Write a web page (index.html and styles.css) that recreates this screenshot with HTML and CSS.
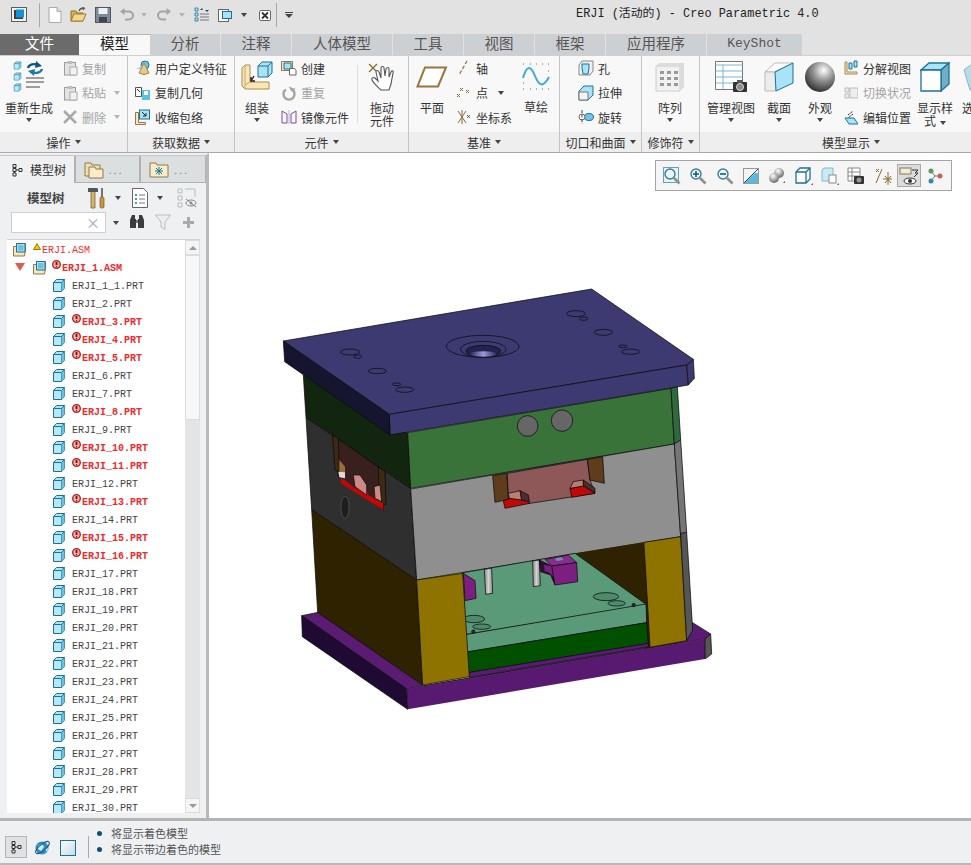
FILE: index.html
```html
<!DOCTYPE html>
<html lang="zh">
<head>
<meta charset="utf-8">
<title>ERJI (活动的) - Creo Parametric 4.0</title>
<link rel="stylesheet" href="styles.css">
</head>
<body>
<svg class="sprite" aria-hidden="true">
  <defs>
    <symbol id="part" viewBox="0 0 14 15"><path d="M1.5 4.5 4.5 1.5h8v9l-3 3h-8z" fill="#a9e3f8" stroke="#1d7196"/><path d="M1.5 4.5h8v9" fill="none" stroke="#1d7196"/><path d="M9.5 4.5l3-3v9l-3 3z" fill="#6fc0dc"/><path d="M9.5 4.5l3-3" stroke="#1d7196"/><path d="M2.500 5.500h6.500v7h-6.500z" fill="#b6e9fb"/></symbol>
    <symbol id="asm" viewBox="0 0 15 15"><path d="M1.500 4.500h3v-3h9v7l-1 5.500h-11z" fill="#f8e5b8" stroke="#8d7a52"/><path d="M4.500 1.500h8.500v8.500h-8.500z" fill="#a9e3f8" stroke="#1d7196"/><path d="M6 3h5.500v5.500h-5.500z" fill="#6fc0dc"/></symbol>
    <symbol id="err" viewBox="0 0 9 9"><circle cx="4.500" cy="4.500" r="3.800" fill="#f3b0ac" stroke="#b01818" stroke-width="1.300"/><path d="M4.500 2v3" stroke="#a00000" stroke-width="1.800"/><path d="M4.500 6v1.200" stroke="#a00000"/></symbol>
    <symbol id="mag" viewBox="0 0 18 18"><circle cx="7" cy="7" r="5" fill="#eaf6fb" stroke="#3b7d9b" stroke-width="1.400"/><path d="M11 11l5.500 5.500" stroke="#8f8f8f" stroke-width="2.600"/></symbol>
    <symbol id="clip" viewBox="0 0 16 16"><rect x="2.500" y="2.500" width="11" height="12.500" fill="#e3e3e3" stroke="#9c9c9c"/><rect x="5.500" y="1" width="5" height="3" fill="#bdbdbd"/><rect x="8" y="7" width="7" height="8" fill="#f2f2f2" stroke="#aaa"/></symbol>
    <symbol id="folder" viewBox="0 0 20 20"><path d="M1 4h6l1 2h8v11H1z" fill="#f3dfa8" stroke="#8d7a52"/><path d="M5 8h6l1 2h7v9H5z" fill="#f9ecc6" stroke="#8d7a52"/></symbol>
    <symbol id="treeic" viewBox="0 0 14 16"><path d="M3 2.500h3v3h-3zM3 6.500h3v3h-3zM3 11h3v3h-3zM9 6.500h3v3h-3zM4.500 5.500v1M4.500 9.500v1.500M6 8h3" fill="none" stroke="#333"/></symbol>
  </defs>
</svg>
<div class="app">
  <header class="titlebar">
    <div class="qat">
      <svg width="16" height="16" viewBox="0 0 16 16"><rect x=".5" y=".5" width="15" height="14" fill="#f2f2f2" stroke="#5c5c5c"/><rect x="3" y="3" width="9" height="9" fill="#3d3d3d"/><rect x="5" y="2.500" width="8" height="8" fill="#0f93dc"/></svg>
      <span class="qsep"></span>
      <svg width="14" height="16" viewBox="0 0 14 16"><path d="M1 .5h8l4 4v11H1z" fill="#fff" stroke="#aaa"/><path d="M9 .5v4h4" fill="#ddd" stroke="#aaa"/></svg>
      <svg width="17" height="16" viewBox="0 0 17 16"><path d="M1 4h5l1 2h6v8H1z" fill="#d9b25c" stroke="#8f6d25"/><path d="M1 14l3-7h12l-3 7z" fill="#f4d78d" stroke="#a17d2c"/><path d="M9 4c1-3 3-3 5-3l-1-1m1 1-1 2" fill="none" stroke="#555" stroke-width="1.300"/></svg>
      <svg width="16" height="16" viewBox="0 0 16 16"><rect x=".5" y=".5" width="15" height="15" fill="#7e8b96" stroke="#555"/><rect x="3.500" y="1" width="9" height="6" fill="#eef2f5"/><rect x="4" y="10" width="8" height="5" fill="#3c4650"/></svg>
      <svg width="15" height="14" viewBox="0 0 15 14"><path d="M4 3.500h6a3.500 3.500 0 0 1 0 8H6" fill="none" stroke="#a4a4a4" stroke-width="2"/><path d="M5.500 0v7L1 3.500z" fill="#a4a4a4"/></svg>
      <i class="caret gray"></i>
      <svg width="15" height="14" viewBox="0 0 15 14"><path d="M11 3.500H5a3.500 3.500 0 0 0 0 8h4" fill="none" stroke="#a4a4a4" stroke-width="2"/><path d="M9.500 0v7L14 3.500z" fill="#a4a4a4"/></svg>
      <i class="caret gray"></i>
      <svg width="16" height="16" viewBox="0 0 16 16"><path d="M1 1h3v3H1zM1 6h3v3H1zM1 11h3v3H1z" fill="#bfe6f5" stroke="#1d7196" stroke-width=".8"/><path d="M6 7h9M6 10h9M6 13h9" stroke="#777"/><path d="M6 3h3l-1-2zM15 3h-4l2 2z" fill="#14506d"/></svg>
      <svg width="15" height="15" viewBox="0 0 15 15"><rect x=".5" y="1.500" width="10" height="12" fill="#fff" stroke="#666"/><rect x="4.500" y="3.500" width="9" height="7" fill="#a9e3f8" stroke="#1d7196"/></svg>
      <i class="caret"></i>
      <svg width="12" height="11" viewBox="0 0 12 11"><rect x=".5" y=".5" width="11" height="10" rx="1.500" fill="#fff" stroke="#666"/><path d="M3 2.500l6 6m0-6-6 6" stroke="#333" stroke-width="1.800"/></svg>
      <span class="qsep"></span>
      <span class="more"><i class="bar"></i><i class="caret"></i></span>
    </div>
    <div class="wintitle">ERJI (活动的) - Creo Parametric 4.0</div>
  </header>

  <nav class="tabs">
    <span class="tab file">文件</span>
    <span class="tab active">模型</span>
    <span class="tab w70">分析</span>
    <span class="tab w70">注释</span>
    <span class="tab w100">人体模型</span>
    <span class="tab w70">工具</span>
    <span class="tab w70">视图</span>
    <span class="tab w70">框架</span>
    <span class="tab w100">应用程序</span>
    <span class="tab keyshot">KeyShot</span>
  </nav>

  <section class="ribbon">
    <div class="group g-op">
      <div class="gbody">
        <div class="big b-regen">
          <svg class="bigic" width="32" height="32" viewBox="0 0 32 32"><use href="#part" x="0" y="0" width="9" height="9"/><use href="#part" x="0" y="11" width="9" height="9"/><use href="#part" x="0" y="22" width="9" height="9"/><path d="M13 17h18M13 21h18M13 26h14" stroke="#808080" stroke-width="1.600"/><path d="M15 7a6.500 5 0 0 1 10-3" fill="none" stroke="#14567a" stroke-width="2.400"/><path d="M23 0l6 5-7 2z" fill="#14567a"/><path d="M29 8a6.500 5 0 0 1-10 3" fill="none" stroke="#1a7aa8" stroke-width="2.400"/><path d="M21 15l-6-5 7-2z" fill="#1a7aa8"/></svg>
          <span>重新生成</span><i class="caret"></i>
        </div>
        <div class="col c-op muted">
          <div class="row"><svg width="16" height="16"><use href="#clip"/></svg><span>复制</span></div>
          <div class="row"><svg width="16" height="16"><use href="#clip"/></svg><span>粘贴</span><i class="caret gray"></i></div>
          <div class="row"><svg width="16" height="16" viewBox="0 0 16 16"><path d="M2 2l12 12m0-12L2 14" stroke="#a8a8a8" stroke-width="2.500"/></svg><span>删除</span><i class="caret gray"></i></div>
        </div>
      </div>
      <div class="glabel">操作<i class="caret"></i></div>
    </div>

    <div class="group g-data">
      <div class="gbody">
        <div class="col c-data">
          <div class="row"><svg width="16" height="16" viewBox="0 0 16 16"><circle cx="10" cy="5" r="4" fill="#6ec6ea" stroke="#1d7196"/><path d="M1 9l7-4 0 4z" fill="#9fd6ec"/><path d="M9 3 4 13q5 3 10 0z" fill="#e6c98e" stroke="#a38442"/></svg><span>用户定义特征</span></div>
          <div class="row"><svg width="16" height="16" viewBox="0 0 16 16"><path d="M.5 2.500h6v9h-6z" fill="#fff" stroke="#555"/><path d="M2 4l3 3" stroke="#333"/><path d="M7 5h8v10H7z" fill="#5bc0e6"/><path d="M9 6h4v4H9z" fill="#fff"/></svg><span>复制几何</span></div>
          <div class="row"><svg width="16" height="16" viewBox="0 0 16 16"><path d="M.5 3.500h3v10h7v2h-10z" fill="#f8e5b8" stroke="#8d7a52"/><rect x="4.500" y="1" width="10" height="9" fill="#a9e3f8" stroke="#1d7196"/><path d="M7 3l4 4m0-3v3H8" fill="none" stroke="#222"/></svg><span>收缩包络</span></div>
        </div>
      </div>
      <div class="glabel">获取数据<i class="caret"></i></div>
    </div>

    <div class="group g-comp">
      <div class="gbody">
        <div class="big b-asm">
          <svg class="bigic" width="32" height="32" viewBox="0 0 32 32"><path d="M1 7l3-3h5v17h19v7H4l-3-3z" fill="#fbe7b5" stroke="#a88c50"/><path d="M4 4v24M9 21l-5 3" stroke="#c7a868" fill="none"/><path d="M17 5l4-4h10v11l-4 4H17z" fill="#a9e3f8" stroke="#1d7196"/><path d="M27 16V5l4-4M27 5H17" fill="none" stroke="#1d7196"/><path d="M13 15l-3 5m0-4v4h4" fill="none" stroke="#222" stroke-width="1.400"/></svg>
          <span>组装</span><i class="caret"></i>
        </div>
        <div class="col c-comp">
          <div class="row"><svg width="16" height="16" viewBox="0 0 16 16"><path d="M.5 1.500h11v9h-11z" fill="#f8e5b8" stroke="#8d7a52"/><path d="M3 3h7v6H3z" fill="#a9e3f8" stroke="#1d7196"/><path d="M8.500 8.500h5l1.500 2v4.500H8.500z" fill="#fff" stroke="#666"/></svg><span>创建</span></div>
          <div class="row muted"><svg width="16" height="16" viewBox="0 0 16 16"><path d="M5 4.500a5.500 5.500 0 1 0 6 0" fill="none" stroke="#a4a4a4" stroke-width="2.400"/><path d="M9 1v6h5z" fill="#a4a4a4" transform="rotate(-30 9 4)"/></svg><span>重复</span></div>
          <div class="row"><svg width="16" height="16" viewBox="0 0 16 16"><path d="M1 2l5 3v9H1zM15 2l-5 3v9h5z" fill="none" stroke="#7b4da3"/><path d="M8 1v14" stroke="#bbb"/></svg><span>镜像元件</span></div>
        </div>
        <span class="vsep"></span>
        <div class="big b-drag tall">
          <svg class="bigic" width="28" height="29" viewBox="0 0 28 29"><path d="M1 1l8 8m0-8-8 8" stroke="#8b6a2f" stroke-width="1.300"/><path d="M13 27c-3-3-7-6-9-10-1-2 1-3 3-2l3 3-2-9c0-2 2-2 3 0l2 6V5c0-2 3-2 3 0l1 8 1-7c1-2 3-2 3 0l0 8 2-5c1-2 3-1 2 1l-2 11-2 6z" fill="#fff" stroke="#555" stroke-width="1.100"/></svg>
          <span class="twoline">拖动<br>元件</span>
        </div>
      </div>
      <div class="glabel">元件<i class="caret"></i></div>
    </div>

    <div class="group g-datum">
      <div class="gbody">
        <div class="big b-plane">
          <svg class="bigic plane" width="32" height="22" viewBox="0 0 32 22"><path d="M9 1.500h21l-8 19H1.500z" fill="#fff" stroke="#96743a" stroke-width="2"/></svg>
          <span>平面</span>
        </div>
        <div class="col c-datum">
          <div class="row"><svg width="14" height="16" viewBox="0 0 14 16"><path d="M11 1 3 15" stroke="#96743a" stroke-width="1.300" stroke-dasharray="3.500 2"/></svg><span>轴</span></div>
          <div class="row"><svg width="14" height="16" viewBox="0 0 14 16"><path d="M4 3l3 3m0-3-3 3M10 5l3 3m0-3-3 3M1 9l3 3m0-3-3 3" stroke="#8b6a2f"/></svg><span>点</span><i class="caret"></i></div>
          <div class="row"><svg width="14" height="16" viewBox="0 0 14 16"><path d="M2 2l8 12m0-12L2 14M6 1v14" stroke="#8b6a2f" fill="none"/><path d="M11 6l3 3m0-3-3 3" stroke="#333" stroke-width=".8"/></svg><span>坐标系</span></div>
        </div>
        <div class="big b-sketch tall">
          <svg class="bigic" width="28" height="28" viewBox="0 0 28 28"><path d="M1 15C5 1 9 3 13 13s8 12 14 1" fill="none" stroke="#3fa9d8" stroke-width="2"/><path d="M1 1h1M8 1h1M14 1h1M20 1h1M26 1h1M1 26h1M8 26h1M14 26h1M20 26h1M26 26h1M26 8h1M1 20h1" stroke="#666"/></svg>
          <span>草绘</span>
        </div>
      </div>
      <div class="glabel">基准<i class="caret"></i></div>
    </div>

    <div class="group g-cut">
      <div class="gbody">
        <div class="col c-cut">
          <div class="row"><svg width="16" height="16" viewBox="0 0 16 16"><path d="M1 5l3-4h11v10l-3 4H1z" fill="#f0f0f0" stroke="#888"/><path d="M4 4h7v4l-1 6H5L4 8z" fill="#a9e3f8" stroke="#1d7196"/></svg><span>孔</span></div>
          <div class="row"><svg width="16" height="16" viewBox="0 0 16 16"><path d="M1 6l5-5h9v9l-5 5H1z" fill="#a9e3f8" stroke="#1d7196"/><path d="M1 7h9v8H1z" fill="#f4f4f4" stroke="#777"/></svg><span>拉伸</span></div>
          <div class="row"><svg width="16" height="16" viewBox="0 0 16 16"><ellipse cx="11" cy="8" rx="4.500" ry="3.500" fill="#6ec6ea" stroke="#1d7196"/><ellipse cx="4" cy="8" rx="3" ry="3" fill="#fff" stroke="#666"/><path d="M4 1v14" stroke="#444" stroke-dasharray="3 1.500"/></svg><span>旋转</span></div>
        </div>
      </div>
      <div class="glabel">切口和曲面<i class="caret"></i></div>
    </div>

    <div class="group g-dec">
      <div class="gbody">
        <div class="big b-pat tall30">
          <svg class="bigic" width="30" height="30" viewBox="0 0 30 30"><path d="M1 4h24v25H1z" fill="#f1f1f1" stroke="#ccc"/><path d="M25 4l4-3v24l-4 4zM1 4l3-3h25l-4 3z" fill="#dcdcdc"/><path d="M5 9h4v3H5zM12 9h4v3h-4zM19 9h4v3h-4zM5 15h4v3H5zM12 15h4v3h-4zM19 15h4v3h-4zM5 21h4v3H5zM12 21h4v3h-4zM19 21h4v3h-4z" fill="#9a9a9a"/></svg>
          <span>阵列</span><i class="caret"></i>
        </div>
      </div>
      <div class="glabel">修饰符<i class="caret"></i></div>
    </div>

    <div class="group g-disp">
      <div class="gbody">
        <div class="big b-view">
          <svg class="bigic" width="32" height="32" viewBox="0 0 32 32"><path d="M.5.500h27v28H.5z" fill="#fff" stroke="#777"/><path d="M.5 4h27M.5 10h27M.5 16h27M.5 22h27M8 4v24" stroke="#79b8d0"/><rect x="18" y="21" width="14" height="10" rx="1" fill="#333"/><rect x="22" y="19" width="5" height="3" fill="#555"/><circle cx="25" cy="26" r="3.500" fill="#8a8a8a" stroke="#ddd"/></svg>
          <span>管理视图</span><i class="caret"></i>
        </div>
        <div class="big b-sec tall30">
          <svg class="bigic" width="30" height="30" viewBox="0 0 30 30"><path d="M1 10 11 1h18L10 10z" fill="#fff" stroke="#bbb"/><path d="M1 10h11v19H1z" fill="#ececec" stroke="#bbb"/><path d="M11 10 29 1v20L12 29z" fill="#a9e3f8" stroke="#1d7196"/></svg>
          <span>截面</span><i class="caret"></i>
        </div>
        <div class="big b-app tall30">
          <svg class="bigic" width="30" height="30" viewBox="0 0 30 30"><defs><radialGradient id="sph" cx=".62" cy=".28" r=".8"><stop offset="0" stop-color="#fff"/><stop offset=".45" stop-color="#8e8e8e"/><stop offset="1" stop-color="#222"/></radialGradient></defs><circle cx="15" cy="15" r="15" fill="url(#sph)"/></svg>
          <span>外观</span><i class="caret"></i>
        </div>
        <div class="col c-disp">
          <div class="row"><svg width="14" height="16" viewBox="0 0 14 16"><path d="M1 2v12h12v-2H3V2z" fill="#f8e5b8" stroke="#a88c50"/><path d="M5 3h3v6H5zM10 1h3v6h-3z" fill="#a9e3f8" stroke="#1d7196"/></svg><span>分解视图</span></div>
          <div class="row muted"><svg width="14" height="16" viewBox="0 0 14 16"><path d="M1 3h4v4H1zM1 9h4v4H1zM6 3h8v10H6z" fill="#eee" stroke="#bbb"/></svg><span>切换状况</span></div>
          <div class="row"><svg width="14" height="16" viewBox="0 0 14 16"><path d="M1 9h9l4 6H5z" fill="#a9e3f8" stroke="#1d7196"/><path d="M4 6l5-4m0 3-5 4" stroke="#222" stroke-dasharray="2 1"/></svg><span>编辑位置</span></div>
        </div>
        <div class="big b-style tall30">
          <svg class="bigic" width="30" height="30" viewBox="0 0 30 30"><path d="M1 8l8-7h20L21 8z" fill="#a9e3f8" stroke="#1d7196" stroke-width="1.300"/><path d="M21 8l8-7v21l-8 7z" fill="#6fb0c6" stroke="#1d7196" stroke-width="1.300"/><path d="M1 8h20v21H1z" fill="#fff" stroke="#1d7196" stroke-width="1.300"/></svg>
          <span class="twoline">显示样<br>式<i class="caret inl"></i></span>
        </div>
        <div class="big b-clip tall30">
          <svg class="bigic" width="30" height="30" viewBox="0 0 30 30"><path d="M2 8 10 2h18l-4 26H8z" fill="#b6dcea" stroke="#8fb4c4"/></svg>
          <span>选</span>
        </div>
      </div>
      <div class="glabel">模型显示<i class="caret"></i></div>
    </div>
  </section>

  <main class="main">
    <aside class="side">
      <div class="stabs">
        <div class="stab on"><svg width="14" height="16"><use href="#treeic"/></svg><span>模型树</span></div>
        <div class="stab"><svg width="20" height="20"><use href="#folder"/></svg><span class="dots">. . .</span></div>
        <div class="stab"><svg width="20" height="18" viewBox="0 0 20 18"><path d="M1 3h6l1 2h11v12H1z" fill="#f9ecc6" stroke="#8d7a52"/><path d="M6 11h8M10 7v8M7 8l6 6m0-6-6 6" stroke="#16709b"/></svg><span class="dots">. . .</span></div>
      </div>
      <div class="stool">
        <b>模型树</b>
        <svg class="hammer" width="18" height="22" viewBox="0 0 18 22"><path d="M3 4h4v17H3z" fill="#d7b36a" stroke="#6d5327" stroke-width=".7"/><path d="M0 1h9l1 1v3H0z" fill="#555"/><path d="M14 1v9" stroke="#555" stroke-width="1.600"/><rect x="12" y="10" width="4" height="11" rx="1.500" fill="#c8963c" stroke="#6d5327" stroke-width=".7"/></svg>
        <i class="caret"></i>
        <svg class="docic" width="16" height="20" viewBox="0 0 16 20"><path d="M.5.500h11l4 4v15H.5z" fill="#fff" stroke="#666"/><path d="M3 7h2M3 11h2M3 15h2" stroke="#1d7196" stroke-width="1.500"/><path d="M7 7h6M7 11h6M7 15h6" stroke="#777"/></svg>
        <i class="caret"></i>
        <svg class="treeeye" width="20" height="20" viewBox="0 0 20 20"><path d="M1 1h4v4H1zM1 8h4v4H1zM1 15h4v4H1zM8 1h10v8" fill="none" stroke="#bbb"/><ellipse cx="14" cy="15" rx="5" ry="3" fill="none" stroke="#888"/><circle cx="14" cy="15" r="1.500" fill="#888"/><path d="M9 11l10 8" stroke="#888"/></svg>
      </div>
      <div class="ssearch">
        <div class="sinput"><span>×</span></div>
        <i class="caret"></i>
        <svg class="bino" width="16" height="16" viewBox="0 0 16 16"><path d="M3 1h3v4h1v9H1V6zM13 1h-3v4H9v9h6V6z" fill="#3c3c3c"/><path d="M7 6h2v3H7z" fill="#777"/></svg>
        <svg class="funnel" width="16" height="16" viewBox="0 0 16 16"><path d="M.5 1h15l-5.500 7v7.500L6 13V8z" fill="#eee" stroke="#bcbcbc"/></svg>
        <span class="plus"></span>
      </div>
      <div class="tree">
        <div class="rows">
          <div class="node top"><svg class="ic15" width="15" height="15"><use href="#asm"/></svg><svg class="flag" width="8" height="7" viewBox="0 0 8 7"><path d="M4 .5 7.500 6.500h-7z" fill="#f4c400" stroke="#a07b00"/></svg><span class="bad">ERJI.ASM</span></div>
          <div class="node l1"><i class="open"></i><svg class="ic15" width="15" height="15"><use href="#asm"/></svg><svg class="flag" width="9" height="9"><use href="#err"/></svg><span class="bad strong">ERJI_1.ASM</span></div>
          <div class="node l2"><svg width="14" height="15"><use href="#part"/></svg><span>ERJI_1_1.PRT</span></div>
          <div class="node l2"><svg width="14" height="15"><use href="#part"/></svg><span>ERJI_2.PRT</span></div>
          <div class="node l2"><svg width="14" height="15"><use href="#part"/></svg><svg class="flag" width="9" height="9"><use href="#err"/></svg><span class="bad strong">ERJI_3.PRT</span></div>
          <div class="node l2"><svg width="14" height="15"><use href="#part"/></svg><svg class="flag" width="9" height="9"><use href="#err"/></svg><span class="bad strong">ERJI_4.PRT</span></div>
          <div class="node l2"><svg width="14" height="15"><use href="#part"/></svg><svg class="flag" width="9" height="9"><use href="#err"/></svg><span class="bad strong">ERJI_5.PRT</span></div>
          <div class="node l2"><svg width="14" height="15"><use href="#part"/></svg><span>ERJI_6.PRT</span></div>
          <div class="node l2"><svg width="14" height="15"><use href="#part"/></svg><span>ERJI_7.PRT</span></div>
          <div class="node l2"><svg width="14" height="15"><use href="#part"/></svg><svg class="flag" width="9" height="9"><use href="#err"/></svg><span class="bad strong">ERJI_8.PRT</span></div>
          <div class="node l2"><svg width="14" height="15"><use href="#part"/></svg><span>ERJI_9.PRT</span></div>
          <div class="node l2"><svg width="14" height="15"><use href="#part"/></svg><svg class="flag" width="9" height="9"><use href="#err"/></svg><span class="bad strong">ERJI_10.PRT</span></div>
          <div class="node l2"><svg width="14" height="15"><use href="#part"/></svg><svg class="flag" width="9" height="9"><use href="#err"/></svg><span class="bad strong">ERJI_11.PRT</span></div>
          <div class="node l2"><svg width="14" height="15"><use href="#part"/></svg><span>ERJI_12.PRT</span></div>
          <div class="node l2"><svg width="14" height="15"><use href="#part"/></svg><svg class="flag" width="9" height="9"><use href="#err"/></svg><span class="bad strong">ERJI_13.PRT</span></div>
          <div class="node l2"><svg width="14" height="15"><use href="#part"/></svg><span>ERJI_14.PRT</span></div>
          <div class="node l2"><svg width="14" height="15"><use href="#part"/></svg><svg class="flag" width="9" height="9"><use href="#err"/></svg><span class="bad strong">ERJI_15.PRT</span></div>
          <div class="node l2"><svg width="14" height="15"><use href="#part"/></svg><svg class="flag" width="9" height="9"><use href="#err"/></svg><span class="bad strong">ERJI_16.PRT</span></div>
          <div class="node l2"><svg width="14" height="15"><use href="#part"/></svg><span>ERJI_17.PRT</span></div>
          <div class="node l2"><svg width="14" height="15"><use href="#part"/></svg><span>ERJI_18.PRT</span></div>
          <div class="node l2"><svg width="14" height="15"><use href="#part"/></svg><span>ERJI_19.PRT</span></div>
          <div class="node l2"><svg width="14" height="15"><use href="#part"/></svg><span>ERJI_20.PRT</span></div>
          <div class="node l2"><svg width="14" height="15"><use href="#part"/></svg><span>ERJI_21.PRT</span></div>
          <div class="node l2"><svg width="14" height="15"><use href="#part"/></svg><span>ERJI_22.PRT</span></div>
          <div class="node l2"><svg width="14" height="15"><use href="#part"/></svg><span>ERJI_23.PRT</span></div>
          <div class="node l2"><svg width="14" height="15"><use href="#part"/></svg><span>ERJI_24.PRT</span></div>
          <div class="node l2"><svg width="14" height="15"><use href="#part"/></svg><span>ERJI_25.PRT</span></div>
          <div class="node l2"><svg width="14" height="15"><use href="#part"/></svg><span>ERJI_26.PRT</span></div>
          <div class="node l2"><svg width="14" height="15"><use href="#part"/></svg><span>ERJI_27.PRT</span></div>
          <div class="node l2"><svg width="14" height="15"><use href="#part"/></svg><span>ERJI_28.PRT</span></div>
          <div class="node l2"><svg width="14" height="15"><use href="#part"/></svg><span>ERJI_29.PRT</span></div>
          <div class="node l2"><svg width="14" height="15"><use href="#part"/></svg><span>ERJI_30.PRT</span></div>
        </div>
        <div class="sbar">
          <span class="sbtn"><i class="up"></i></span>
          <span class="thumb"></span>
          <span class="strack"></span>
          <span class="sbtn"><i class="down"></i></span>
        </div>
      </div>
    </aside>

    <div class="canvas">
      <div class="viewbar">
        <span class="vb"><svg width="18" height="18" viewBox="0 0 18 18"><rect x=".5" y=".5" width="15" height="15" fill="#e8f4f9" stroke="#6a9fb6"/><use href="#mag" width="18" height="18"/></svg></span>
        <span class="vb"><svg width="18" height="18" viewBox="0 0 18 18"><use href="#mag" width="18" height="18"/><path d="M4 7h6M7 4v6" stroke="#125c80" stroke-width="1.600"/></svg></span>
        <span class="vb"><svg width="18" height="18" viewBox="0 0 18 18"><use href="#mag" width="18" height="18"/><path d="M4 7h6" stroke="#125c80" stroke-width="1.600"/></svg></span>
        <span class="vb"><svg width="16" height="16" viewBox="0 0 16 16"><rect x=".5" y=".5" width="15" height="15" fill="#f3f3f3" stroke="#999"/><path d="M1 15 12 5l3 0v10z" fill="#5db9dc"/><path d="M1 15 15 1" stroke="#14506d"/></svg></span>
        <span class="vb"><svg width="18" height="18" viewBox="0 0 18 18"><defs><radialGradient id="s2" cx=".4" cy=".3" r=".8"><stop offset="0" stop-color="#fff"/><stop offset="1" stop-color="#555"/></radialGradient></defs><circle cx="11" cy="6" r="5" fill="url(#s2)"/><circle cx="6" cy="11" r="5" fill="url(#s2)"/><path d="M15 16h2v-2z" fill="#555"/></svg></span>
        <span class="vb"><svg width="18" height="18" viewBox="0 0 18 18"><path d="M1 5l4-4h10v11l-4 4H1z" fill="#fff" stroke="#1d7196" stroke-width="1.300"/><path d="M1 5h10v11M11 5l4-4" fill="none" stroke="#1d7196" stroke-width="1.300"/><path d="M16 18h2v-2z" fill="#555"/></svg></span>
        <span class="vb"><svg width="18" height="18" viewBox="0 0 18 18"><path d="M1 3l2-2h9v13H1z" fill="#c8eaf7" stroke="#8bb5c6"/><rect x="8" y="8" width="7" height="8" fill="#fff" stroke="#888"/><path d="M16 18h2v-2z" fill="#555"/></svg></span>
        <span class="vb"><svg width="18" height="18" viewBox="0 0 18 18"><path d="M1 1h12v13H1zM1 5h12M1 9h12M5 1v13" fill="#fff" stroke="#888"/><rect x="7" y="9" width="10" height="8" rx="1" fill="#333"/><circle cx="12" cy="13" r="2.500" fill="#999"/></svg></span>
        <span class="vb"><svg width="18" height="18" viewBox="0 0 18 18"><path d="M2 2l3 3m0-3-3 3M8 2 2 16M11 9l6 7m0-7-6 7M14 5v13M9 12h9" stroke="#8b6a2f" fill="none"/></svg></span>
        <span class="vb on"><svg width="20" height="18" viewBox="0 0 20 18"><rect x="1" y="1" width="11" height="6" fill="#f8ecc8" stroke="#777"/><path d="M13 3h6l-3 3h3l-4 4" fill="none" stroke="#333"/><ellipse cx="11" cy="14" rx="6" ry="3" fill="#fff" stroke="#333"/><circle cx="11" cy="14" r="2" fill="#333"/></svg></span>
        <span class="vb"><svg width="16" height="16" viewBox="0 0 16 16"><path d="M4 3l4 5-4 5M8 8h5" stroke="#777" fill="none"/><circle cx="4" cy="3" r="2.500" fill="#5a9e5a"/><circle cx="13" cy="8" r="2.500" fill="#c9605c"/><circle cx="4" cy="13" r="2.500" fill="#3d85ad"/></svg></span>
      </div>

      <svg class="model" width="450" height="440" viewBox="0 0 1350 1320">
        <defs>
          <linearGradient id="pin"><stop offset="0" stop-color="#8a8a8a"/><stop offset=".5" stop-color="#d0d0d0"/><stop offset="1" stop-color="#8a8a8a"/></linearGradient>
          <linearGradient id="bore"><stop offset="0" stop-color="#2a2a58"/><stop offset=".5" stop-color="#9a9bdc"/><stop offset="1" stop-color="#2a2a58"/></linearGradient>
        </defs>
        <g stroke="#0a0a0a" stroke-width="2.200" stroke-linejoin="round">
          <path d="M95 1007 145 997 460 1217 1250 1082 1268 1028 1322 1062 1305 1077 410 1227z" fill="#5a1c73"/>
          <path d="M410 1227 1305 1077 1305 1137 413 1288z" fill="#581a70" stroke="none"/>
          <path d="M95 1007 410 1227 413 1288 97 1070z" fill="#1f0a33"/>
          <path d="M1305 1077 1322 1062 1325 1122 1305 1137z" fill="#565656"/>
          <path d="M125 688 440 900 458 1215 143 997z" fill="#2e2200"/>
          <path d="M108 412 422 625 440 900 125 688z" fill="#2f2f2f"/>
          <path d="M100 285 415 460 422 625 108 412z" fill="#12260f"/>
          <path d="M188 465 345 575 340 690 205 590z" fill="#38201f"/>
          <path d="M188 465 205 475 208 575 195 570zM325 560 345 575 348 675 328 665z" fill="#3d2a14"/>
          <path d="M208 540 225 560 225 580 208 575z" fill="#9a6d3c" stroke="none"/>
          <path d="M205 575 225 577 225 595 208 592z" fill="#dcdcdc" stroke="none"/>
          <path d="M212 595 225 600 255 625 290 625 295 645 340 670 340 690 212 610z" fill="#c00808" stroke="none"/>
          <path d="M250 585 270 585 290 615 290 645 255 620zM312 620 330 615 335 665 315 655z" fill="#cd8888"/>
          <ellipse cx="225" cy="682" rx="12" ry="33" fill="#1d1d1d" stroke="#555"/>
          <path d="M413 458 1203 325 1213 492 422 625z" fill="#3a733a"/>
          <path d="M1203 325 1222 320 1232 480 1213 492z" fill="#2f6a3c"/>
          <circle cx="773" cy="438" r="31" fill="#666"/>
          <circle cx="876" cy="422" r="32" fill="#666"/>
          <path d="M422 627 1213 492 1232 770 440 900z" fill="#8f8f8f"/>
          <path d="M1213 492 1232 480 1250 757 1232 770z" fill="#767676"/>
          <path d="M712 580 952 538 960 600 975 640 780 670 715 660z" fill="#8e5858"/>
          <path d="M668 587 710 580 715 658 675 667zM952 538 998 530 1003 610 960 600z" fill="#5e3c1c"/>
          <path d="M700 663 720 655 770 660 780 670 705 685zM900 625 940 618 975 640 905 652z" fill="#c00808"/>
          <path d="M715 640 750 632 755 660 718 655zM900 625 910 605 940 600 940 618z" fill="#b98070"/>
          <path d="M750 632 775 645 778 665 755 660zM940 600 975 625 975 638 940 615z" fill="#4a3030"/>
          <path d="M900 822 1122 787 1145 1105 1128 1105z" fill="#2e2200" stroke="none"/>
          <path d="M575 879 915 820 1131 975 580 1065z" fill="#5b9a78"/>
          <ellipse cx="1008" cy="950" rx="38" ry="12" fill="#4f8a6a"/>
          <ellipse cx="1040" cy="970" rx="26" ry="8" fill="#4f8a6a"/>
          <ellipse cx="612" cy="1017" rx="32" ry="11" fill="#4f8a6a"/>
          <ellipse cx="635" cy="1040" rx="27" ry="8" fill="#4f8a6a"/>
          <path d="M585 1064 1128 972 1130 1028 590 1116z" fill="#5b9a78"/>
          <circle cx="610" cy="1055" r="5" fill="#333"/>
          <circle cx="1091" cy="975" r="5" fill="#333"/>
          <path d="M590 1116 1130 1028 1135 1092 595 1178z" fill="#005000"/>
          <path d="M595 1178 1135 1090 1137 1100 597 1192z" fill="#5a1c73"/>
          <path d="M643 868 665 865 668 940 647 943z" fill="url(#pin)"/>
          <path d="M788 843 808 840 811 917 790 920z" fill="url(#pin)"/>
          <path d="M808 840 845 858 855 915 842 885 812 875z" fill="#2f1038"/>
          <path d="M822 855 845 858 850 890 838 878 824 872z" fill="#7c1f80" stroke="none"/>
          <path d="M825 838 895 825 920 848 845 858z" fill="#8a2b8e"/>
          <path d="M845 858 920 848 923 905 855 915z" fill="#7c1f80"/>
          <path d="M855 835 875 832 880 840 860 843z" fill="#6f93a8" stroke="none"/>
          <path d="M580 880 615 902 618 955 585 962z" fill="#7c1f80"/>
          <path d="M440 900 578 880 598 1190 458 1215z" fill="#8f7300"/>
          <path d="M1122 787 1232 770 1250 1082 1140 1102z" fill="#8f7300"/>
          <path d="M1232 760 1250 757 1268 1050 1250 1082z" fill="#565656"/>
          <path d="M40 183 965 27 1270 238 1250 255 358 403z" fill="#3d3a72"/>
          <path d="M358 403 1250 255 1255 315 360 465z" fill="#3d3a72"/>
          <path d="M1250 255 1270 238 1273 295 1255 315z" fill="#3d3a72"/>
          <path d="M40 183 358 403 360 465 44 245z" fill="#15152f"/>
          <g fill="#3d3a72">
            <ellipse cx="240" cy="216" rx="29" ry="9"/><ellipse cx="263" cy="230" rx="12" ry="5"/>
            <ellipse cx="322" cy="273" rx="27" ry="8"/>
            <ellipse cx="380" cy="313" rx="13" ry="4"/><ellipse cx="404" cy="329" rx="27" ry="8"/>
            <ellipse cx="918" cy="101" rx="28" ry="9"/><ellipse cx="941" cy="116" rx="13" ry="5"/>
            <ellipse cx="1000" cy="157" rx="27" ry="9"/>
            <ellipse cx="1059" cy="199" rx="13" ry="4"/><ellipse cx="1082" cy="215" rx="27" ry="8"/>
            <ellipse cx="638" cy="199" rx="109" ry="33"/><ellipse cx="640" cy="208" rx="68" ry="24"/>
          </g>
          <ellipse cx="640" cy="213" rx="52" ry="17" fill="#24234d"/>
          <ellipse cx="640" cy="222" rx="40" ry="8" fill="url(#bore)" stroke="none"/>
        </g>
      </svg>
    </div>
  </main>

  <footer class="status">
    <div class="stbtn"><svg width="14" height="16"><use href="#treeic"/></svg></div>
    <svg class="globe" width="17" height="17" viewBox="0 0 17 17"><circle cx="8" cy="9" r="6.500" fill="#2e8fca"/><path d="M4 7l4-2 2 3-3 4-3-2zM11 10l3-1-1 4z" fill="#d6eef9"/><ellipse cx="8.500" cy="8.500" rx="8.500" ry="3" fill="none" stroke="#1d5c86" transform="rotate(-40 8.500 8.500)"/></svg>
    <svg class="sq" width="16" height="16" viewBox="0 0 16 16"><defs><linearGradient id="sqg" x1="0" y1="0" x2="1" y2="1"><stop offset="0" stop-color="#fff"/><stop offset="1" stop-color="#c3dbe7"/></linearGradient></defs><rect x=".5" y=".5" width="15" height="15" fill="url(#sqg)" stroke="#1d7196"/></svg>
    <span class="stsep"></span>
    <ul class="msgs">
      <li>将显示着色模型</li>
      <li>将显示带边着色的模型</li>
    </ul>
  </footer>
</div>
</body>
</html>
```
FILE: styles.css
```css
* { box-sizing: border-box; }
html, body { margin: 0; padding: 0; }
body { width: 971px; height: 865px; overflow: hidden; background: #fff; font-family: "Noto Sans CJK SC", "Liberation Sans", sans-serif; font-size: 12px; color: #333; }
.sprite { width: 0; height: 0; position: absolute; }
svg { display: block; flex: none; }
.app { display: flex; flex-direction: column; height: 865px; }

.caret { display: block; flex: none; width: 0; height: 0; border-left: 3.500px solid transparent; border-right: 3.500px solid transparent; border-top: 4px solid #444; }
.caret.gray { border-top-color: #b5b5b5; }

.titlebar { height: 34px; flex: none; background: #e2e2e2; display: flex; align-items: center; }
.qat { display: grid; grid-template-columns: 28px 9px 22px 25px 24px 22px 16px 22px 15px 24px 23px 18px 17px 8px 9px; padding-left: 11px; align-items: center; height: 26px; width: 293px; flex: none; margin-top: -4px; }
.qat .qsep { width: 1px; height: 24px; background: #a8a8a8; }
.more { display: flex; flex-direction: column; gap: 1px; align-items: center; width: 9px; }
.more .bar { width: 8px; height: 1px; background: #444; display: block; }
.more .caret { border-left-width: 4px; border-right-width: 4px; }
.wintitle { margin-left: 283px; font: 11.900px "Liberation Mono", "Noto Sans CJK SC", monospace; color: #222; margin-top: -11px; white-space: nowrap; }

.tabs { height: 21px; flex: none; display: flex; background: #e2e2e2; gap: 1px; }
.tab { background: #cdd0d3; color: #555; font-size: 14.500px; line-height: 17px; text-align: center; width: 70px; }
.tab.w100 { width: 100px; }
.tab.file { width: 79px; margin-right: -1px; background: #6b6b6b; color: #fff; }
.tab.active { width: 71px; margin-right: -1px; background: #f8f8f8; color: #222; border-top: 1px solid #b5b5b5; line-height: 16px; }
.tab.keyshot { width: 95px; font: 13px/19px "Liberation Mono", monospace; }

.ribbon { height: 98px; flex: none; display: flex; background: #f8f8f8; border-bottom: 1px solid #a9a9a9; border-top: 1px solid #d0d0d0; overflow: hidden; }
.group { display: flex; flex-direction: column; flex: none; border-right: 1px solid #c4c4c4; }
.gbody { height: 76px; display: flex; position: relative; overflow: hidden; }
.glabel { height: 20px; background: #eeeeee; display: flex; align-items: center; justify-content: center; gap: 4px; font-size: 12px; color: #333; }
.g-op { width: 128px; } .g-data { width: 107px; } .g-comp { width: 174px; } .g-datum { width: 151px; }
.g-cut { width: 82px; } .g-dec { width: 58px; } .g-disp { width: 271px; border-right: 0; }
.g-disp .glabel { padding-left: 31px; }

.big { display: flex; flex-direction: column; align-items: center; flex: none; line-height: 14px; white-space: nowrap; }
.big .bigic { margin-top: 5px; margin-bottom: 8px; }
.big .caret { margin-top: 3px; }
.big .plane { margin-top: 10px; margin-bottom: 13px; }
.big.tall .bigic { margin-top: 7px; margin-bottom: 9px; }
.big.tall30 .bigic { margin-top: 6px; margin-bottom: 9px; }
.twoline { line-height: 13px; text-align: center; }
.caret.inl { display: inline-block; vertical-align: middle; margin: 0 0 0 4px; }

.col { display: flex; flex-direction: column; flex: none; }
.row { display: flex; align-items: center; height: 24.500px; gap: 4px; white-space: nowrap; color: #333; }
.row .caret { margin-left: 4px; }
.muted, .muted .row { color: #a3a3a3; }

.b-regen { width: 48px; margin-left: 5px; }
.c-op { margin-left: 9px; }
.c-data { margin-left: 7px; }
.b-asm { width: 32px; margin-left: 6px; }
.c-comp { margin-left: 8px; }
.vsep { width: 1px; height: 58px; background: #dedede; margin: 9px 0 0 8px; flex: none; }
.b-drag { width: 28px; margin-left: 10px; }
.b-plane { width: 32px; margin-left: 7px; }
.c-datum { margin-left: 8px; }
.c-datum .row { gap: 6px; }
.b-sketch { width: 28px; margin-left: 10px; }
.c-cut { margin-left: 18px; }
.b-pat { width: 30px; margin-left: 13px; }
.b-view { width: 48px; margin-left: 7px; }
.b-sec { width: 30px; margin-left: 9px; }
.b-app { width: 30px; margin-left: 11px; }
.c-disp { margin-left: 9px; }
.c-disp .row { gap: 5px; }
.b-style { width: 36px; margin-left: 6px; }
.b-clip { width: 30px; margin-left: 9px; align-items: flex-start; }

.main { flex: 1; min-height: 0; display: flex; }
.side { width: 209px; flex: none; background: #eef0f2; border-right: 3px solid #b9b9b9; display: flex; flex-direction: column; border-top: 2px solid #eef0f2; }
.stabs { height: 28px; display: flex; flex: none; border-top: 1px solid #c7c7c7; }
.stab { width: 66px; background: #dcdfe0; border: 1px solid #b2b2b2; border-top: 0; display: flex; align-items: center; gap: 5px; padding-left: 8px; font-size: 12px; color: #333; }
.stab.on { width: 75px; background: #eef0f2; border: 0; border-right: 1px solid #b2b2b2; padding-left: 10px; gap: 6px; }
.stab .dots { color: #777; font-size: 10px; }
.stool { height: 29px; flex: none; display: flex; align-items: center; }
.stool b { margin-left: 27px; font-size: 12.500px; color: #444; }
.stool .hammer { margin-left: 23px; }
.stool .caret { margin-left: 9px; }
.stool .docic { margin-left: 11px; }
.stool .treeeye { margin-left: 14px; }
.ssearch { height: 22px; flex: none; display: flex; align-items: flex-start; padding-left: 11px; }
.sinput { width: 95px; height: 21px; background: #fff; border: 1px solid #cfcfcf; display: flex; justify-content: flex-end; padding-right: 5px; color: #aaa; font-size: 14px; line-height: 18px; }
.ssearch .caret { margin: 9px 0 0 7px; }
.bino { margin: 2px 0 0 10px; }
.funnel { margin: 2px 0 0 10px; }
.plus { width: 11px; height: 11px; margin: 5px 0 0 12px; background: linear-gradient(#aaa, #aaa) center / 11px 3px no-repeat, linear-gradient(#aaa, #aaa) center / 3px 11px no-repeat; }

.tree { margin: 5px 6px 5px 7px; flex: 1; min-height: 0; background: #fff; border-top: 1px solid #d2d2d2; display: flex; overflow: hidden; }
.rows { flex: 1; min-width: 0; overflow: hidden; }
.node { height: 18px; display: flex; align-items: center; font: 10px/15px "Liberation Mono", monospace; color: #444; white-space: nowrap; }
.node span { padding-top: 3px; }
.node.top { padding-left: 5px; }
.node.l1 { padding-left: 8px; }
.node.l2 { padding-left: 45px; }
.node.l2 > svg:first-child { margin-right: 6px; }
.node.l2 .flag { margin-right: 1px; margin-top: -5px; }
.node.top .flag { margin: -5px 1px 0 6px; }
.node.l1 .flag { margin: -5px 1px 0 5px; }
.open { width: 0; height: 0; border-left: 5px solid transparent; border-right: 5px solid transparent; border-top: 8px solid #e05a50; margin-right: 7px; }
.bad { color: #f02a2a; }
.strong { font-weight: 700; }
.sbar { width: 15px; flex: none; display: flex; flex-direction: column; background: #e4e4e4; margin-right: 0; }
.sbtn { height: 15px; flex: none; background: #f5f5f5; border: 1px solid #dcdcdc; display: flex; align-items: center; justify-content: center; }
.up { width: 0; height: 0; border-left: 4px solid transparent; border-right: 4px solid transparent; border-bottom: 4px solid #999; }
.down { width: 0; height: 0; border-left: 4px solid transparent; border-right: 4px solid transparent; border-top: 4px solid #999; }
.thumb { height: 165px; flex: none; background: #f7f7f7; border: 1px solid #dcdcdc; }
.strack { flex: 1; }

.canvas { flex: 1; min-width: 0; background: #fff; position: relative; overflow: hidden; }
.viewbar { position: absolute; left: 446px; top: 7px; width: 297px; height: 31px; background: #f5f5f5; border: 1px solid #a5a5a5; display: flex; align-items: center; padding-left: 3px; }
.vb { width: 26.300px; height: 23px; flex: none; display: flex; align-items: center; justify-content: center; }
.vb.on { background: #dcdcdc; border: 1px solid #aaa; width: 24px; margin: 0 1px; }
.model { position: absolute; left: 61px; top: 127px; }

.status { height: 47px; flex: none; background: #eef0f2; border-top: 3px solid #b4b4b4; border-bottom: 2px solid #b9b9b9; display: flex; align-items: flex-start; position: relative; }
.stbtn { width: 22px; height: 22px; margin: 15px 0 0 5px; background: #dfe1e3; border: 1px solid #b5b5b5; display: flex; align-items: center; justify-content: center; }
.globe { margin: 18px 0 0 7px; }
.sq { margin: 19px 0 0 9px; }
.stsep { width: 1px; height: 22px; background: #aaa; margin: 15px 0 0 12px; }
.msgs { list-style: none; margin: 4px 0 0 0; padding: 0 0 0 22px; font-size: 11px; line-height: 16px; color: #555; }
.msgs li { position: relative; }
.msgs li::before { content: ""; position: absolute; left: -14px; top: 6px; width: 5px; height: 5px; border-radius: 50%; background: #14506d; }
```
